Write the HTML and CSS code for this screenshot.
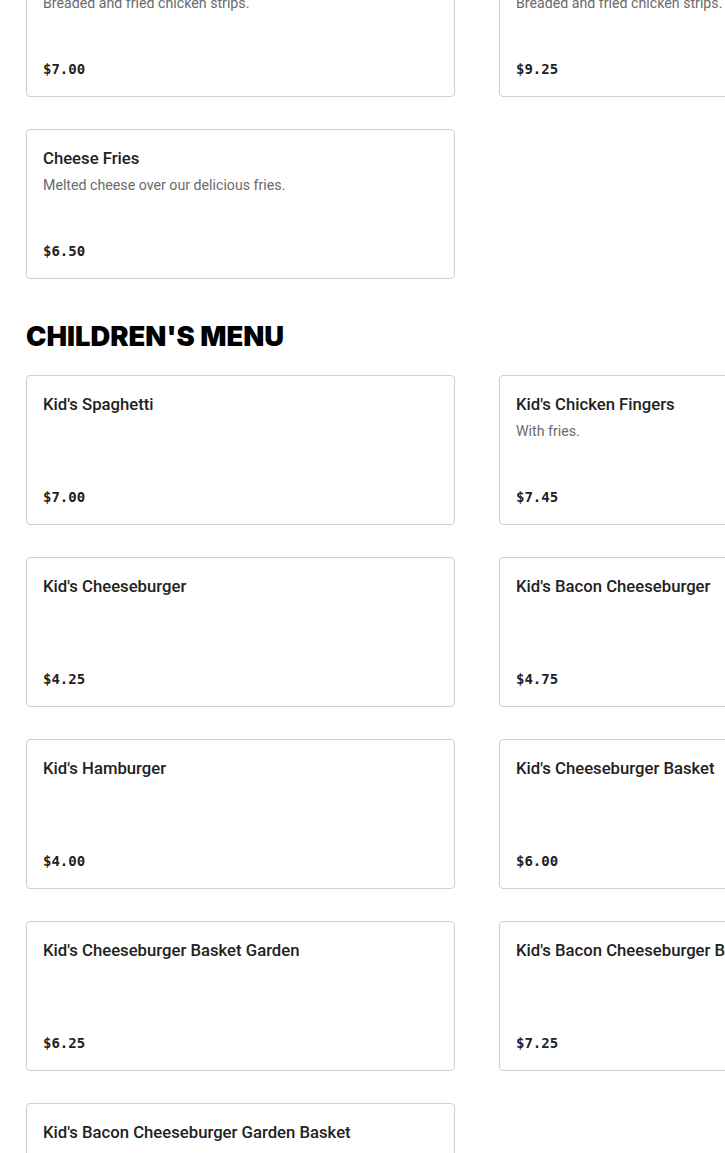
FILE: index.html
```html
<!DOCTYPE html>
<html lang="en">
<head>
<meta charset="utf-8">
<title>Menu</title>
<link rel="stylesheet" href="styles.css">
</head>
<body>
<main class="page">
  <section class="section">
    <div class="grid">
      <article class="card">
        <h3 class="name">Chicken Strips</h3>
        <p class="desc">Breaded and fried chicken strips.</p>
        <p class="price">$7.00</p>
      </article>
      <article class="card">
        <h3 class="name">Chicken Strip Basket</h3>
        <p class="desc">Breaded and fried chicken strips.</p>
        <p class="price">$9.25</p>
      </article>
      <article class="card">
        <h3 class="name">Cheese Fries</h3>
        <p class="desc">Melted cheese over our delicious fries.</p>
        <p class="price">$6.50</p>
      </article>
    </div>
  </section>

  <section class="section">
    <h2 class="heading">CHILDREN'S MENU</h2>
    <div class="grid">
      <article class="card">
        <h3 class="name">Kid's Spaghetti</h3>
        <p class="price">$7.00</p>
      </article>
      <article class="card">
        <h3 class="name">Kid's Chicken Fingers</h3>
        <p class="desc">With fries.</p>
        <p class="price">$7.45</p>
      </article>
      <article class="card">
        <h3 class="name">Kid's Cheeseburger</h3>
        <p class="price">$4.25</p>
      </article>
      <article class="card">
        <h3 class="name">Kid's Bacon Cheeseburger</h3>
        <p class="price">$4.75</p>
      </article>
      <article class="card">
        <h3 class="name">Kid's Hamburger</h3>
        <p class="price">$4.00</p>
      </article>
      <article class="card">
        <h3 class="name">Kid's Cheeseburger Basket</h3>
        <p class="price">$6.00</p>
      </article>
      <article class="card">
        <h3 class="name">Kid's Cheeseburger Basket Garden</h3>
        <p class="price">$6.25</p>
      </article>
      <article class="card">
        <h3 class="name">Kid's Bacon Cheeseburger Basket</h3>
        <p class="price">$7.25</p>
      </article>
      <article class="card">
        <h3 class="name">Kid's Bacon Cheeseburger Garden Basket</h3>
        <p class="price">$7.75</p>
      </article>
    </div>
  </section>
</main>
</body>
</html>
```

FILE: styles.css
```css
html, body {
  margin: 0;
  padding: 0;
  background: #ffffff;
  overflow: hidden;
}

body {
  font-family: Roboto, "Liberation Sans", sans-serif;
  color: #222222;
}

.page {
  margin-top: -53px;
  padding-left: 26px;
  width: 902px;
}

.section {
  display: flex;
  flex-direction: column;
}

.section + .section {
  margin-top: 39px;
}

.heading {
  margin: 0 0 21px 0;
  font-family: Inter, "Liberation Sans", sans-serif;
  font-weight: 900;
  font-size: 27.4px;
  line-height: 36px;
  letter-spacing: 0;
  color: #000000;
}

.grid {
  display: grid;
  grid-template-columns: 429px 429px;
  column-gap: 44px;
  row-gap: 32px;
}

.card {
  box-sizing: border-box;
  height: 150px;
  border: 1px solid #cfcfcf;
  border-radius: 4px;
  padding: 16px 16px 17px 16px;
  display: flex;
  flex-direction: column;
}

.name {
  margin: 1px 0 0 0;
  font-size: 16.7px;
  line-height: 24px;
  font-weight: 500;
  color: #222222;
  white-space: nowrap;
}

.desc {
  margin: 3px 0 0 0;
  font-size: 14.2px;
  line-height: 22px;
  color: #6b6b6b;
}

.price {
  margin: auto 0 0 0;
  font-family: "DejaVu Sans Mono", "Liberation Mono", monospace;
  font-weight: 700;
  font-size: 14px;
  line-height: 20px;
  color: #222222;
}
```
